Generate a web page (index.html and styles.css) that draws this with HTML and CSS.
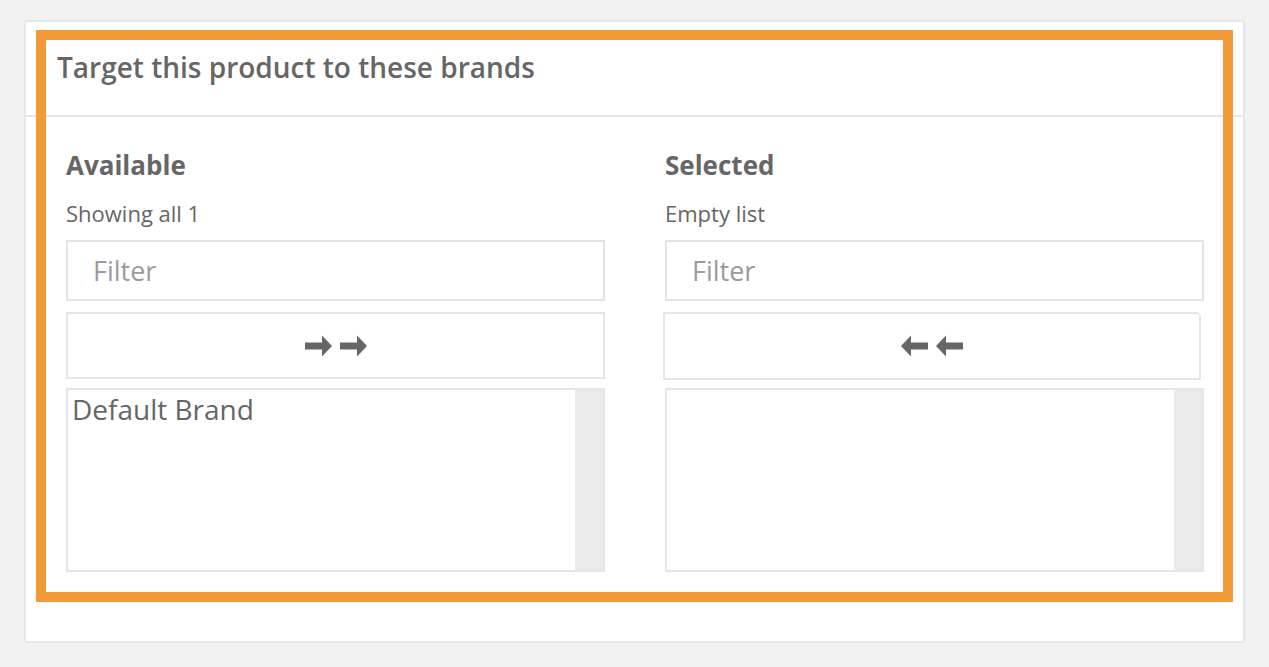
FILE: index.html
```html
<!DOCTYPE html>
<html lang="en">
<head>
<meta charset="utf-8">
<title>Target this product to these brands</title>
<link rel="stylesheet" href="styles.css">
</head>
<body>
<div class="card">
  <div class="card-header">
    <h2 class="title">Target this product to these brands</h2>
  </div>
  <div class="card-body">
    <div class="dual">
      <div class="col">
        <h3 class="col-title">Available</h3>
        <div class="info">Showing all 1</div>
        <input class="filter" type="text" placeholder="Filter">
        <button class="move" type="button" aria-label="Move all">
          <svg class="arrow" viewBox="0 0 27 22" width="27" height="22"><path d="M0 7.4h17V0.4L27 11 17 21.6v-7H0z"/></svg>
          <svg class="arrow" viewBox="0 0 27 22" width="27" height="22"><path d="M0 7.4h17V0.4L27 11 17 21.6v-7H0z"/></svg>
        </button>
        <div class="list">
          <div class="items">
            <div class="opt">Default Brand</div>
          </div>
          <div class="scrollbar"></div>
        </div>
      </div>
      <div class="col">
        <h3 class="col-title">Selected</h3>
        <div class="info">Empty list</div>
        <input class="filter" type="text" placeholder="Filter">
        <button class="move move-back" type="button" aria-label="Remove all">
          <svg class="arrow" viewBox="0 0 27 22" width="27" height="22"><path d="M27 7.4H10V0.4L0 11l10 10.6v-7h17z"/></svg>
          <svg class="arrow" viewBox="0 0 27 22" width="27" height="22"><path d="M27 7.4H10V0.4L0 11l10 10.6v-7h17z"/></svg>
        </button>
        <div class="list">
          <div class="items"></div>
          <div class="scrollbar"></div>
        </div>
      </div>
    </div>
  </div>
  <div class="highlight"></div>
</div>
</body>
</html>
```
FILE: styles.css
```css
* { box-sizing: border-box; }

html, body {
  margin: 0;
  padding: 0;
  background: #f2f2f2;
}

body {
  font-family: "Open Sans", "Liberation Sans", sans-serif;
  color: #666;
  padding: 20px 0 0 24px;
  height: 667px;
  overflow: hidden;
}

.card {
  position: relative;
  width: 1221px;
  height: 623px;
  background: #fff;
  border: 2px solid #e6e7e9;
  border-radius: 3px;
}

.card-header {
  height: 95px;
  border-bottom: 2px solid #e6e7e9;
  padding: 29px 31px 0;
}

.title {
  margin: 0;
  font-size: 28px;
  font-weight: 600;
  line-height: 33px;
  color: #666;
}

.card-body {
  padding: 30px 39px 0 40px;
}

.dual {
  display: grid;
  grid-template-columns: 539px 539px;
  column-gap: 60px;
}

.col {
  display: flex;
  flex-direction: column;
}

.col-title {
  margin: 0;
  font-size: 26px;
  font-weight: 700;
  line-height: 36px;
  color: #666;
}

.info {
  margin-top: 16px;
  font-size: 22px;
  line-height: 29px;
  color: #666;
}

.filter {
  margin: 12px 0 0;
  height: 61px;
  width: 100%;
  border: 2px solid #e4e4e4;
  border-radius: 0;
  padding: 0 25px;
  font-family: "Open Sans", "Liberation Sans", sans-serif;
  font-size: 27px;
  color: #666;
  background: #fff;
  outline: none;
}

.filter::placeholder {
  color: #9b9b9b;
}

.move {
  margin-top: 11px;
  height: 67px;
  width: 100%;
  border: 2px solid #e6e6e6;
  background: #fff;
  border-radius: 0;
  display: flex;
  align-items: center;
  justify-content: center;
  gap: 8px;
  padding: 0;
  cursor: pointer;
}

.move-back {
  margin-left: -2px;
  width: calc(100% - 1px);
  height: 68px;
  border-top-right-radius: 5px;
}

.arrow {
  display: block;
  fill: #666;
}

.list {
  margin-top: 9px;
  height: 184px;
  border: 2px solid #e6e6e6;
  display: flex;
  background: #fff;
}

.move-back + .list {
  margin-top: 8px;
}

.items {
  flex: 1;
}

.opt {
  padding: 0 4px;
  font-size: 28px;
  line-height: 38px;
  color: #666;
}

.scrollbar {
  width: 28px;
  background: #ebebeb;
}

.highlight {
  position: absolute;
  left: 10px;
  top: 8px;
  width: 1197px;
  height: 572px;
  border: 10px solid #f19a38;
  pointer-events: none;
}
```
